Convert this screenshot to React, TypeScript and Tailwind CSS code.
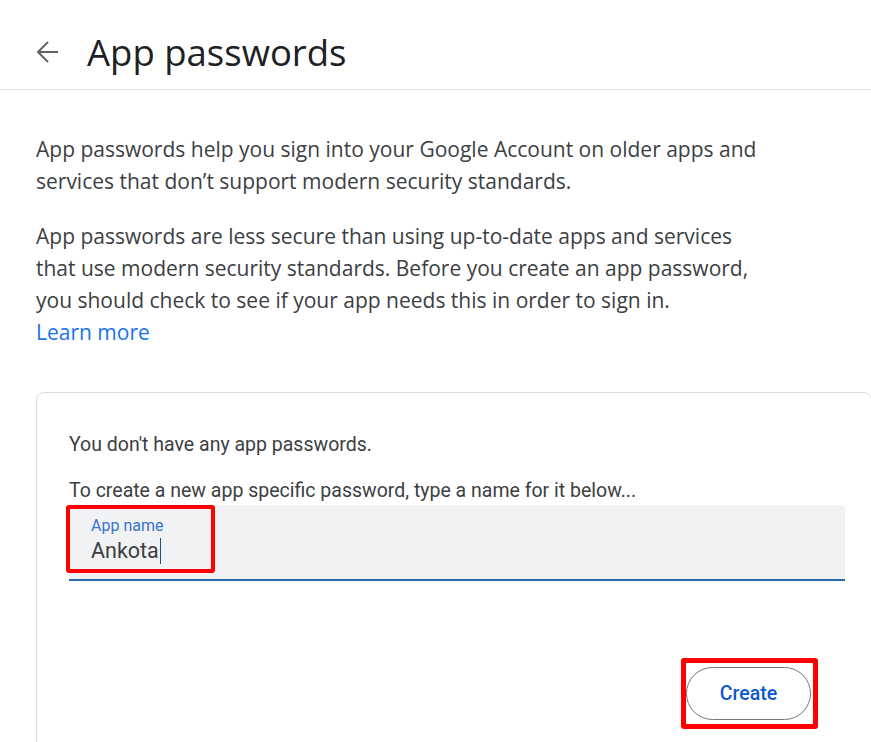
export default function App() {
  return (
    <div className="min-h-screen overflow-hidden bg-white font-['Open_Sans',sans-serif] text-[#3c4043]">
      <header className="flex h-[90px] items-center gap-[28px] border-b border-[#e0e0e0] pl-[35px] pt-[14px]">
        <svg width="24" height="24" viewBox="0 0 24 24" aria-hidden>
          <path d="M23 12H3M13 2L3 12l10 10" fill="none" stroke="#5f6368" strokeWidth="2" />
        </svg>
        <h1 className="text-[36.5px] leading-[44px] text-[#202124]">App passwords</h1>
      </header>

      <main className="pl-[36px] pt-[43px]">
        <div className="w-[740px] text-[21px] leading-[32px]">
          <p>
            App passwords help you sign into your Google Account on older apps and services that
            don’t support modern security standards.
          </p>
          <p className="mt-[23px]">
            App passwords are less secure than using up-to-date apps and services that use modern
            security standards. Before you create an app password, you should check to see if your
            app needs this in order to sign in.
          </p>
          <a href="#" className="text-[#1a73e8]">
            Learn more
          </a>
        </div>

        <section className="mt-[44px] w-[836px] rounded-lg border border-[#dadce0] px-[32px] pb-[40px] pt-[38px] font-['Roboto',sans-serif] text-[19.5px] leading-[28px]">
          <p>You don't have any app passwords.</p>
          <p className="mt-[18px]">To create a new app specific password, type a name for it below...</p>

          <div className="relative h-[76px] w-[776px] rounded-t bg-[#f0f2f4] border-b-2 border-[#2c69a8] pl-[22px] pt-[11px]">
            <div className="text-[16px] leading-[20px] text-[#3a73c8]">App name</div>
            <div className="flex items-center text-[21.5px] leading-[30px] text-[#3c4043]">
              Ankota
              <span className="ml-px h-[26px] w-px bg-[#1f4f8a]" />
            </div>
            <div className="absolute left-[-3px] top-0 h-[68px] w-[149px] rounded-[3px] border-4 border-[#ff0000]" />
          </div>

          <div className="mt-[86px] flex w-[776px] justify-end pr-[34px]">
            <div className="relative">
              <button className="h-[53px] w-[125px] rounded-full border border-[#777] text-[19.5px] font-medium text-[#0b57d0]">
                Create
              </button>
              <div className="absolute left-[-5px] top-[-9px] h-[71px] w-[137px] rounded-[3px] border-[5px] border-[#ff0000]" />
            </div>
          </div>
        </section>
      </main>
    </div>
  );
}
